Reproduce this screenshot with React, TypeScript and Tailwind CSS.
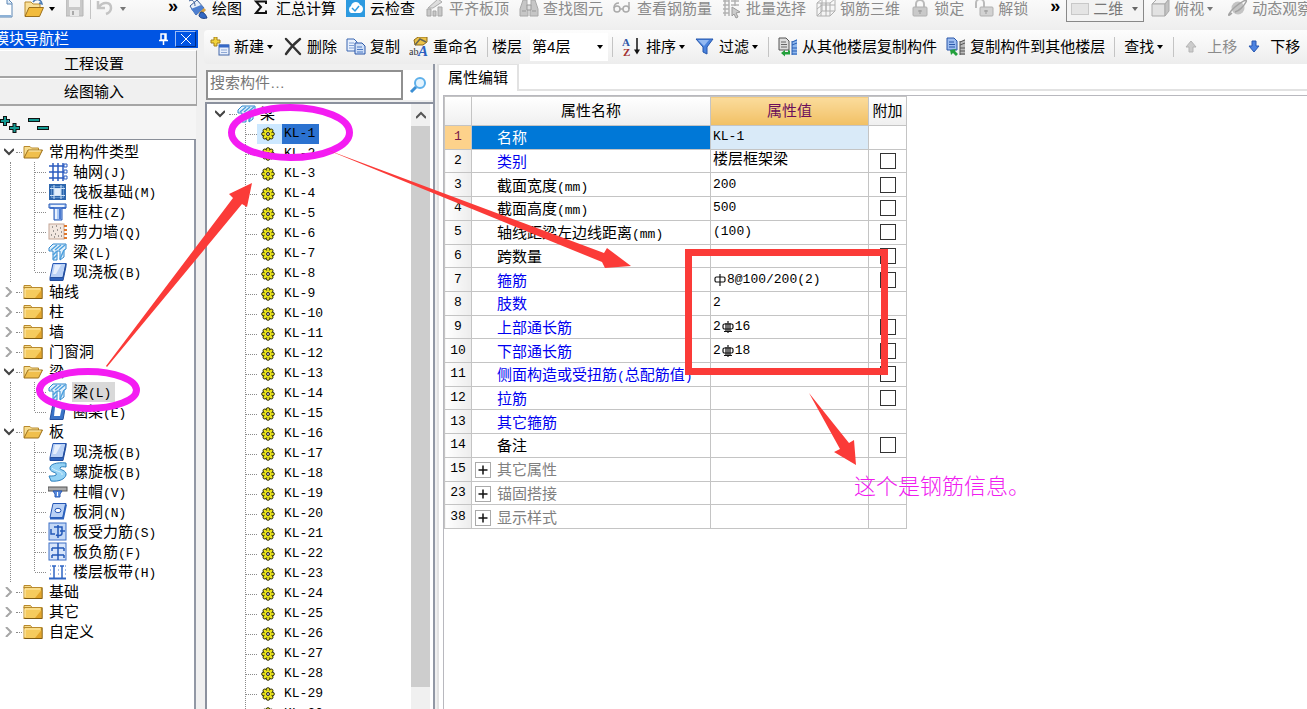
import React, { useState } from 'react';

type IconProps = { className?: string };

const Svg: React.FC<{ children: React.ReactNode; className?: string }> = ({ children, className = 'w-5 h-5' }) => (
  <svg viewBox="0 0 20 20" className={`${className} shrink-0`} fill="none" aria-hidden="true">
    {children}
  </svg>
);

const Caret: React.FC<IconProps> = ({ className = 'text-black' }) => (
  <svg viewBox="0 0 8 8" className={`w-2 h-2 shrink-0 ${className}`} aria-hidden="true">
    <path d="M1 2h6L4 6z" fill="currentColor" />
  </svg>
);

const FolderIcon: React.FC<{ open?: boolean }> = ({ open }) => (
  <Svg>
    {open ? (
      <>
        <path d="M1 15.500V4.500h6l1.500 1.500h7v3" fill="#f7dd8d" stroke="#b98a2d" />
        <path d="M1 16l4-8h14.500l-4 8z" fill="#f0bf4c" stroke="#9c701c" />
        <path d="M5.700 9h12" stroke="#fdf0bd" />
      </>
    ) : (
      <>
        <path d="M1 6V3.500h6.500L9 5.500h9.500" fill="#f7dd8d" stroke="#b98a2d" />
        <rect x="1" y="5.500" width="18" height="11" fill="#f6cb5e" stroke="#b98a2d" />
        <path d="M1.500 16.500h17.500V6" stroke="#7d5a14" />
        <path d="M2 7h15M2 7v8" stroke="#fdeeb5" />
        <path d="M12 16l6.500-8v8z" fill="#e3a52b" />
      </>
    )}
  </Svg>
);

const icons: Record<string, React.ReactNode> = {
  doc: (
    <Svg>
      <path d="M3 -1h10l5 5v14H3z" fill="#fff" stroke="#5c87b5" />
      <path d="M13 0v5h5" stroke="#5c87b5" fill="#dbe9f7" />
      <path d="M4 17h13" stroke="#8db1d6" strokeWidth="2" />
    </Svg>
  ),
  openFile: (
    <Svg>
      <path d="M1 17V3h6l2 2h7v4" fill="#f9e09a" stroke="#b98a2d" />
      <path d="M1 17.500l4-9h14.500l-4 9z" fill="#f2bb3c" stroke="#9c701c" />
      <path d="M9 3c3-4 8-3 9 2l-3-1" stroke="#4c7cb4" strokeWidth="1.500" />
    </Svg>
  ),
  save: (
    <Svg>
      <path d="M0 0h17v17H0z" fill="#c9c9c9" stroke="#b5b5b5" />
      <path d="M3 0h11v8H3z" fill="#f1f1f1" />
      <path d="M4 11h9v6H4z" fill="#e8e8e8" />
      <path d="M6 12h2v4H6z" fill="#aaa" />
    </Svg>
  ),
  undo: (
    <Svg>
      <path d="M3 2v7h7" stroke="#c4c4c4" strokeWidth="2.500" />
      <path d="M4 8c4-6 12-5 12 1 0 3-2 5-5 6" stroke="#c4c4c4" strokeWidth="2.500" />
    </Svg>
  ),
  paint: (
    <Svg>
      <path d="M2 7l7-6 7 8-8 7z" fill="#e8f0fa" stroke="#3c5f99" />
      <path d="M3 10l10-4 3 3-8 7z" fill="#4d7fd0" />
      <path d="M1 2c3-2 6 0 6 5" stroke="#3c5f99" />
      <path d="M17 10l-5 5" stroke="#d9a441" strokeWidth="3" />
      <path d="M13 13c3 0 5 3 6 6-4 1-8 0-8-3z" fill="#3268c4" stroke="#1d4184" />
    </Svg>
  ),
  sigma: (
    <Svg>
      <path d="M14 5V2.500H4l5 5.500-5 6h10v-2.500" stroke="#111" strokeWidth="2" />
    </Svg>
  ),
  cloud: (
    <Svg>
      <rect width="19" height="18" fill="#2d9ae0" />
      <path d="M5 14a4 4 0 0 1 0-7c1-5 8-5 9-1 4 1 4 7 0 8z" fill="#fff" />
      <path d="M6 9l3 3 4-5" stroke="#2d9ae0" strokeWidth="1.500" />
    </Svg>
  ),
  align: (
    <Svg>
      <path d="M3 9L13 0l4 3-9 6z" fill="#ddd" stroke="#aaa" />
      <path d="M2 10h4v7H2zM8 12h3v5H8zM13 8h4v9h-4z" fill="#c8c8c8" stroke="#a5a5a5" />
    </Svg>
  ),
  binoculars: (
    <Svg>
      <path d="M4 1h4v5l1 2v9H1V10zM12 1h4l3 9v7h-8V8l1-2z" fill="#c6c6c6" stroke="#a8a8a8" />
      <path d="M8 6h4v5H8zM3 12h4M13 12h4" fill="#ddd" stroke="#999" />
    </Svg>
  ),
  glasses: (
    <Svg>
      <circle cx="4" cy="10" r="3" stroke="#aaa" strokeWidth="1.500" />
      <circle cx="13" cy="10" r="3" stroke="#aaa" strokeWidth="1.500" />
      <path d="M7 10h3M1 9c0-4 3-5 5-5M16 10V3" stroke="#aaa" strokeWidth="1.500" />
    </Svg>
  ),
  batch: (
    <Svg>
      <path d="M1 2h6M9 2h8M1 6h6M9 6h8M1 10h6M1 14h6M3 1v16M7 1v16M13 1v6" stroke="#b2b2b2" strokeWidth="1.500" />
      <path d="M10 8l8 5-4 1 2 4-2 1-2-4-2 2z" fill="#ccc" stroke="#999" />
    </Svg>
  ),
  rebar3d: (
    <Svg>
      <path d="M1 4l5-4h13v12l-5 5H1zM6 0v12h13M1 4h13v13M14 4l5-4M6 12l-5 5M10 1v11M1 10l5-4h13M5 4v13M10 4v13" stroke="#b0b0b0" />
    </Svg>
  ),
  lock: (
    <Svg>
      <path d="M6 9V5a4 4 0 0 1 8 0v4" stroke="#bbb" strokeWidth="2" />
      <rect x="3" y="8" width="14" height="9" rx="1" fill="#c9c9c9" stroke="#b0b0b0" />
      <path d="M10 11v4M8 12h4" stroke="#999" />
    </Svg>
  ),
  unlock: (
    <Svg>
      <path d="M2 9V4a4 4 0 0 1 8 0v4" stroke="#bbb" strokeWidth="2" />
      <rect x="6" y="8" width="13" height="9" rx="1" fill="#d2d2d2" stroke="#b0b0b0" />
      <path d="M12 11v4M10 12h4" stroke="#999" />
    </Svg>
  ),
  cube: (
    <Svg>
      <path d="M2 5l5-5h12l-4 5z" fill="#eee" stroke="#aaa" />
      <path d="M2 5h13v12H2z" fill="#e2e2e2" stroke="#aaa" />
      <path d="M15 5l4-5v12l-4 5z" fill="#c2c2c2" stroke="#aaa" />
    </Svg>
  ),
  planet: (
    <Svg>
      <circle cx="10" cy="9" r="6.500" fill="#c4c4c4" />
      <path d="M4 14c-6 6-3-1 3-6s13-9 11-5-7 9-11 10" stroke="#a3a3a3" strokeWidth="1.500" />
    </Svg>
  ),
  create: (
    <Svg>
      <path d="M4 0h3v3h3v3H7v3H4V6H1V3h3z" fill="#f3d33c" stroke="#a5811a" />
      <rect x="9" y="8" width="10" height="10" fill="#e8effb" stroke="#4469a9" />
      <path d="M9 9h10" stroke="#3568c6" strokeWidth="3" />
      <path d="M11 13h6M11 15.500h6" stroke="#8fa9d6" />
    </Svg>
  ),
  remove: (
    <Svg>
      <path d="M3 2l14 15M17 2C12 6 7 11 3 17" stroke="#333" strokeWidth="2.400" strokeLinecap="round" />
    </Svg>
  ),
  copy: (
    <Svg>
      <path d="M1 2h7l3 3v9H1z" fill="#e9f1fd" stroke="#3a67b1" />
      <path d="M3 6h5M3 8.500h5M3 11h5" stroke="#7e9fd6" />
      <path d="M9 6h7l3 3v8H9z" fill="#cfdff7" stroke="#2a57a8" />
      <path d="M11 10h5M11 12.500h6M11 15h6" stroke="#4b79c5" />
    </Svg>
  ),
  rename: (
    <Svg>
      <path d="M5 3l4-3h9v5l-4 3H6z" fill="#ecc247" stroke="#8d6a1a" />
      <path d="M6 8l5-6 6 3" stroke="#665" strokeWidth="1.500" />
      <text x="0" y="18" fontSize="10" fill="#333" fontFamily="Liberation Serif, serif">ab</text>
      <text x="9" y="19" fontSize="15" fontWeight="bold" fontStyle="italic" fill="#2b5fc0" fontFamily="Liberation Serif, serif">A</text>
    </Svg>
  ),
  sort: (
    <Svg>
      <text x="0" y="9" fontSize="11" fontWeight="bold" fill="#2d57a8" fontFamily="Liberation Serif, serif">A</text>
      <text x="1" y="19" fontSize="11" fontWeight="bold" fill="#a33030" fontFamily="Liberation Serif, serif">Z</text>
      <path d="M15 1v15" stroke="#111" strokeWidth="1.500" />
      <path d="M12 12.500h6l-3 5z" fill="#111" />
    </Svg>
  ),
  filter: (
    <Svg>
      <path d="M1 2h17l-6 8v7l-4-2v-5z" fill="#4a83dd" stroke="#2557ad" />
      <path d="M3 3h11l-5 6z" fill="#94baf2" />
    </Svg>
  ),
  copyFrom: (
    <Svg>
      <path d="M1 1h7l3 3v9H1z" fill="#ddd" stroke="#555" />
      <path d="M3 5h5M3 7.500h6M3 10h6" stroke="#666" />
      <path d="M14 5l5-3v16h-5z" fill="#8db6ec" />
      <path d="M14 5l5-2M14 8l5-2M14 11h5M14 14h5M14 17h5M14 4v14" stroke="#285fb4" />
      <path d="M10 13v2h-3v-2l-4 3 4 3.500v-2h5v-4z" fill="#23a03c" />
    </Svg>
  ),
  copyTo: (
    <Svg>
      <path d="M1 1h7l3 3v9H1z" fill="#9dbdf0" stroke="#2a57a8" />
      <path d="M3 5h5M3 7.500h6M3 10h6" stroke="#2a57a8" />
      <path d="M14 5l5-3v16h-5z" fill="#bbb" />
      <path d="M14 5l5-2M14 8l5-2M14 11h5M14 14h5M14 17h5M14 4v14" stroke="#555" />
      <path d="M4 13l6-1-1 2 3 3-2 2-3-3-2 2z" fill="#23a03c" />
    </Svg>
  ),
  up: (
    <Svg>
      <path d="M8 4l5 6h-3v5H6v-5H3z" fill="#ccc" stroke="#b5b5b5" />
    </Svg>
  ),
  down: (
    <Svg>
      <path d="M8 15l5-6h-3V4H6v5H3z" fill="#4c82e0" stroke="#2857b0" />
    </Svg>
  ),
  grid: (
    <Svg>
      <path d="M5 1v18M10 1v18M15 1v18M1 4h17M1 10h17M1 16h17" stroke="#2c5cc0" strokeWidth="1.500" />
      <path d="M16 2h3v3h-3zM16 8h3v3h-3zM16 14h3v3h-3z" fill="#fff" stroke="#2c5cc0" />
    </Svg>
  ),
  raft: (
    <Svg>
      <rect x="1" y="2" width="17" height="16" fill="#2d66ad" />
      <path d="M3 4.500h13M3 15.500h13M3.500 4v12M15.500 4v12" stroke="#5f93cf" />
      <rect x="6.500" y="6.500" width="6" height="7" fill="#e3effc" stroke="#cfe3f8" />
      <path d="M6 3v14M13 3v14M2 6.500h15M2 13.500h15" stroke="#cfe3f8" />
    </Svg>
  ),
  column: (
    <Svg>
      <path d="M1 2h17v4h-4v12H6V6H1z" fill="#a9c8f5" stroke="#2758b5" />
      <path d="M3 4h13M8 7v10" stroke="#fff" strokeWidth="1.500" />
      <path d="M12 7v10M2 6h16" stroke="#2f62c4" strokeWidth="1.500" />
    </Svg>
  ),
  wall: (
    <Svg>
      <rect x="1" y="2" width="15" height="15" fill="#f2e7e0" stroke="#c3a595" />
      <path d="M4 5h1M8 4h1M12 6h1M5 9h1M9 8h1M13 10h1M3 13h1M7 12h1M10 14h1M6 15h1M13 14h1" stroke="#444" />
      <path d="M16 4h3M16 8h3M16 12h3M16 16h3" stroke="#e0762a" strokeWidth="2" />
    </Svg>
  ),
  beam: (
    <Svg>
      <path d="M1 6l4-4h13v5l-2 1v7l-4 3V9H9v9H5V9L1 9z" fill="#e2f1fc" stroke="#2f86cc" />
      <path d="M3 8l6-5M7 8l6-5M11 8l6-5M5 13l4-4M5 17l4-4M12 17l4-9" stroke="#4da0de" strokeWidth="1.500" />
    </Svg>
  ),
  slab: (
    <Svg>
      <path d="M5 1.500h13l-3 14H2z" fill="#b9d1f6" stroke="#2758b5" />
      <path d="M2 15.500h13l3-14v3l-3 14H2z" fill="#2c62bd" stroke="#244f9f" />
      <path d="M7 3h6l-5 9H5z" fill="#e6effc" />
    </Svg>
  ),
  ring: (
    <Svg>
      <path d="M5 1.500h13l-3 16H2z" fill="#3a73c8" stroke="#224f9f" />
      <path d="M7 5h7l-2 9H6z" fill="#fff" />
    </Svg>
  ),
  spiral: (
    <Svg>
      <path d="M18 1c-9-1-17 1-16 6 1 4 8 3 6 6-1 1-4 1-7 1l2 5c8 1 14-2 15-6 1-5-7-5-6-7 1-2 4-1 6-1z" fill="#94d2f5" stroke="#2c7fbd" />
      <path d="M4 6c4 4 11 3 10 7" stroke="#d9f1fd" />
    </Svg>
  ),
  cap: (
    <Svg>
      <rect x="0" y="5" width="19" height="4" fill="#aaa" stroke="#555" />
      <path d="M5 9h9l-2 3v3H7v-3z" fill="#5c8fe0" stroke="#2758b5" />
      <path d="M9.500 10v4" stroke="#fff" />
    </Svg>
  ),
  hole: (
    <Svg>
      <path d="M5 1.500h13l-3 14H2z" fill="#b9d1f6" stroke="#2758b5" />
      <path d="M2 16.500h13l3-14" stroke="#2c62bd" strokeWidth="2" />
      <ellipse cx="10" cy="8.500" rx="3" ry="2.200" fill="#fff" stroke="#2758b5" />
    </Svg>
  ),
  barS: (
    <Svg>
      <rect x="1" y="1" width="17" height="17" fill="#c3d8f6" stroke="#3c6fc6" />
      <path d="M3 7v5h4M10 3v13M6 5h8v6c0 3-4 3-6 2M12 9h5" stroke="#2358b8" strokeWidth="1.500" />
    </Svg>
  ),
  barF: (
    <Svg>
      <rect x="1" y="1" width="17" height="17" fill="#d7e5fa" stroke="#3c6fc6" />
      <path d="M10 1v17M4 6h12M4 13h12M4 6v3M16 6v3M4 13v3M16 13v3" stroke="#2358b8" strokeWidth="1.500" />
    </Svg>
  ),
  strip: (
    <Svg>
      <path d="M1 16.500h17" stroke="#2f65c4" strokeWidth="2" />
      <path d="M4 4h4M12 4h4M6 4v12M14 4v12" stroke="#2f65c4" strokeWidth="1.500" />
      <path d="M2 4h1M2 8h1M2 12h1M10 4h1M10 8h1M10 12h1M17 4h1M17 8h1M17 12h1" stroke="#4c7ace" />
    </Svg>
  ),
};

const GearIcon: React.FC = () => (
  <svg viewBox="0 0 14 14" className="w-3.5 h-3.5 shrink-0" fill="none" aria-hidden="true">
    <g fill="#ece51c" stroke="#2a2a08">
      <circle cx="7" cy="2.500" r="1.800" />
      <circle cx="7" cy="11.500" r="1.800" />
      <circle cx="2.500" cy="7" r="1.800" />
      <circle cx="11.500" cy="7" r="1.800" />
      <circle cx="3.800" cy="3.800" r="1.800" />
      <circle cx="10.200" cy="3.800" r="1.800" />
      <circle cx="3.800" cy="10.200" r="1.800" />
      <circle cx="10.200" cy="10.200" r="1.800" />
    </g>
    <circle cx="7" cy="7" r="3.800" fill="#ece51c" />
    <circle cx="7" cy="7" r="1.500" fill="#ddd" stroke="#222" />
  </svg>
);

// Chinese at 15px, half-width characters in the mono face
const Mixed: React.FC<{ text: string }> = ({ text }) => (
  <>
    {text.split(/([\x20-\x7e]+)/).map((part, i) =>
      i % 2 ? (
        <span key={i} className="font-['Liberation_Mono',monospace] text-[13px] leading-none">{part}</span>
      ) : (
        part
      )
    )}
  </>
);

const Chevron: React.FC<{ open?: boolean }> = ({ open }) => (
  <svg viewBox="0 0 10 10" className="w-2.5 h-2.5 shrink-0" fill="none" strokeWidth="2" aria-hidden="true">
    {open ? <path d="M0 2l5 5 5-5" stroke="#444" /> : <path d="M2 0l5 5-5 5" stroke="#a6a6a6" />}
  </svg>
);

const Branch: React.FC<{ last?: boolean; className?: string }> = ({ last, className = 'w-3.5' }) => (
  <svg viewBox="0 0 14 20" preserveAspectRatio="xMinYMid slice" className={`${className} h-5 shrink-0`} stroke="#8a8a8a" strokeDasharray="1 1" aria-hidden="true">
    <path d={last ? 'M.5 0v10' : 'M.5 0v20'} />
    <path d="M1 10.500h12" />
  </svg>
);

interface ToolProps {
  icon?: string;
  label?: string;
  caret?: boolean;
  disabled?: boolean;
}

const Tool: React.FC<ToolProps> = ({ icon, label, caret, disabled }) => (
  <button
    type="button"
    disabled={disabled}
    aria-label={label ?? icon}
    className="flex items-center shrink-0 gap-1 whitespace-nowrap text-black disabled:text-[#8a8a8a]"
  >
    {icon && icons[icon]}
    {(label || caret) && (
      <span className="flex items-center gap-0.5">
        {label}
        {caret && <Caret className={disabled ? 'text-[#777]' : 'text-black'} />}
      </span>
    )}
  </button>
);

const Separator: React.FC = () => <span className="w-px h-5 shrink-0 bg-[#c4c4c4]" />;

const drawTools: ToolProps[] = [
  { icon: 'paint', label: '绘图' },
  { icon: 'sigma', label: '汇总计算' },
  { icon: 'cloud', label: '云检查' },
  { icon: 'align', label: '平齐板顶', disabled: true },
  { icon: 'binoculars', label: '查找图元', disabled: true },
  { icon: 'glasses', label: '查看钢筋量', disabled: true },
  { icon: 'batch', label: '批量选择', disabled: true },
  { icon: 'rebar3d', label: '钢筋三维', disabled: true },
  { icon: 'lock', label: '锁定', disabled: true },
  { icon: 'unlock', label: '解锁', disabled: true },
];

interface TreeGroup {
  name: string;
  items?: { icon: string; name: string; selected?: boolean }[];
}

const navTree: TreeGroup[] = [
  {
    name: '常用构件类型',
    items: [
      { icon: 'grid', name: '轴网(J)' },
      { icon: 'raft', name: '筏板基础(M)' },
      { icon: 'column', name: '框柱(Z)' },
      { icon: 'wall', name: '剪力墙(Q)' },
      { icon: 'beam', name: '梁(L)' },
      { icon: 'slab', name: '现浇板(B)' },
    ],
  },
  { name: '轴线' },
  { name: '柱' },
  { name: '墙' },
  { name: '门窗洞' },
  {
    name: '梁',
    items: [
      { icon: 'beam', name: '梁(L)', selected: true },
      { icon: 'ring', name: '圈梁(E)' },
    ],
  },
  {
    name: '板',
    items: [
      { icon: 'slab', name: '现浇板(B)' },
      { icon: 'spiral', name: '螺旋板(B)' },
      { icon: 'cap', name: '柱帽(V)' },
      { icon: 'hole', name: '板洞(N)' },
      { icon: 'barS', name: '板受力筋(S)' },
      { icon: 'barF', name: '板负筋(F)' },
      { icon: 'strip', name: '楼层板带(H)' },
    ],
  },
  { name: '基础' },
  { name: '其它' },
  { name: '自定义' },
];

const beams = Array.from({ length: 30 }, (_, i) => `KL-${i + 1}`);

const RebarMark: React.FC<{ grade: 1 | 3 }> = ({ grade }) => (
  <svg viewBox="0 0 14 14" className="w-3.5 h-3.5 shrink-0" fill="none" stroke="#111" strokeWidth="1.200" aria-hidden="true">
    <rect x="2" y="4" width="10" height="5" rx="1.500" />
    {grade === 1 ? <path d="M7 1v12" /> : <path d="M7 1v12M5 3v8M9 3v8M3 11.500h8" />}
  </svg>
);

interface Property {
  no: number;
  name: string;
  value?: React.ReactNode;
  check?: boolean;
  tone?: 'blue' | 'gray';
}

const properties: Property[] = [
  { no: 1, name: '名称', value: 'KL-1' },
  { no: 2, name: '类别', value: <span className="text-[15px]">楼层框架梁</span>, check: true, tone: 'blue' },
  { no: 3, name: '截面宽度(mm)', value: '200', check: true },
  { no: 4, name: '截面高度(mm)', value: '500', check: true },
  { no: 5, name: '轴线距梁左边线距离(mm)', value: '(100)', check: true },
  { no: 6, name: '跨数量', check: true },
  { no: 7, name: '箍筋', value: <><RebarMark grade={1} />8@100/200(2)</>, check: true, tone: 'blue' },
  { no: 8, name: '肢数', value: '2', tone: 'blue' },
  { no: 9, name: '上部通长筋', value: <>2<RebarMark grade={3} />16</>, check: true, tone: 'blue' },
  { no: 10, name: '下部通长筋', value: <>2<RebarMark grade={3} />18</>, check: true, tone: 'blue' },
  { no: 11, name: '侧面构造或受扭筋(总配筋值)', check: true, tone: 'blue' },
  { no: 12, name: '拉筋', check: true, tone: 'blue' },
  { no: 13, name: '其它箍筋', tone: 'blue' },
  { no: 14, name: '备注', check: true },
  { no: 15, name: '其它属性', tone: 'gray' },
  { no: 23, name: '锚固搭接', tone: 'gray' },
  { no: 38, name: '显示样式', tone: 'gray' },
];

const nameColor = (p: Property) => {
  if (p.no === 1) return 'bg-[#0078d7] text-white';
  if (p.tone === 'blue') return 'text-[#0000f0]';
  if (p.tone === 'gray') return 'text-[#808080]';
  return 'text-black';
};

const TopBar: React.FC = () => (
  <header className="h-[30px] shrink-0 overflow-hidden bg-linear-to-b from-[#fafafa] to-[#eeeeee]">
    <div className="flex items-center h-[18px] gap-[10px]">
      <div className="flex items-center w-[184px] shrink-0 gap-2.5 -ml-1.5">
        <Tool icon="doc" />
        <Tool icon="openFile" caret />
        <div className="flex items-center gap-1">
          <Tool icon="save" disabled />
          <Separator />
          <Tool icon="undo" disabled caret />
        </div>
        <span className="ml-auto pb-1.5 text-[18px] leading-none font-bold">»</span>
      </div>
      {drawTools.map((t) => (
        <Tool key={t.label} {...t} />
      ))}
      <span className="ml-3 -mr-1 pb-1.5 text-[18px] leading-none font-bold">»</span>
      <div className="relative flex items-center shrink-0 w-[78px] h-[26px] border border-[#888] bg-[#f3f3f3]">
        <span className="w-[18px] h-3 ml-1 shrink-0 border border-[#c8c8c8] bg-[#e4e4e4]" />
        <select aria-label="视图" className="appearance-none w-full pl-1 text-[#777] outline-none">
          <option>二维</option>
        </select>
        <span className="absolute right-1 pointer-events-none"><Caret className="text-[#666]" /></span>
      </div>
      <div className="flex items-center gap-3.5 -ml-1">
        <Tool icon="cube" label="俯视" caret disabled />
        <Tool icon="planet" label="动态观察" disabled />
      </div>
    </div>
  </header>
);

const ModuleNav: React.FC = () => (
  <aside className="flex flex-col w-[198px] shrink-0 overflow-hidden">
    <div className="flex items-center h-[18px] shrink-0 bg-[#0054e3] text-white">
      <h2 className="-ml-1.5 whitespace-nowrap">模块导航栏</h2>
      <button type="button" aria-label="固定" className="ml-auto mr-1.5">
        <svg viewBox="0 0 12 12" className="w-3 h-3" stroke="#fff" fill="none" strokeWidth="1.500">
          <path d="M4 1h5v6H4zM8 1v6M2 7.500h9M6.500 8v4" />
        </svg>
      </button>
      <button type="button" aria-label="关闭" className="flex items-center justify-center w-[21px] h-4 mr-0.5 border border-[#9dbcf5] border-r-[#002d86] border-b-[#002d86]">
        <svg viewBox="0 0 12 12" className="w-3 h-3" stroke="#fff">
          <path d="M1 1l10 10M11 1L1 11" />
        </svg>
      </button>
    </div>
    <div className="flex flex-col shrink-0 mr-px pt-0.5">
      {['工程设置', '绘图输入'].map((t) => (
        <button key={t} type="button" className="h-7 pr-2 border-r border-b-2 border-[#a5a5a5] border-t border-t-white bg-[#f0f0f0]">
          {t}
        </button>
      ))}
    </div>
    <div className="h-[34px] shrink-0 mr-0.5 border-b border-[#8a8f99] bg-[#f5f5f5]">
      <svg viewBox="0 0 52 33" className="w-[52px] h-[33px]" strokeWidth="4" stroke="#111" aria-hidden="true">
        <path d="M0 15h10M5 10v10M9 22h11M14.500 17v10M28 14h12M37 22h12" />
        <path d="M1 15h8M5 11v8M10 22h9M14.500 18v8M29 14h10M38 22h10" stroke="#149a92" strokeWidth="2" />
      </svg>
    </div>
    <ul className="flex-1 min-h-0 pt-0.5 mr-0.5 bg-white border-r-2 border-[#9298a5] overflow-hidden">
      {navTree.map((group) => (
        <li key={group.name}>
          <div className="flex items-center h-5 pl-1">
            <Chevron open={!!group.items} />
            <span className="w-1.5 ml-0.5 mr-px shrink-0 border-t border-dotted border-[#8a8a8a]" />
            <FolderIcon open={!!group.items} />
            <span className="ml-1.5 whitespace-nowrap">{group.name}</span>
          </div>
          {group.items && (
            <ul className="ml-2.5 pl-[23px] border-l border-dotted border-[#8a8a8a]">
              {group.items.map((item, i) => (
                <li key={item.name} className="flex items-center h-5">
                  <Branch last={i === group.items!.length - 1} />
                  {icons[item.icon]}
                  <span className={`ml-1 px-px pr-1 leading-5 whitespace-nowrap ${item.selected ? 'bg-[#d9d9d9]' : ''}`}>
                    <Mixed text={item.name} />
                  </span>
                </li>
              ))}
            </ul>
          )}
        </li>
      ))}
    </ul>
  </aside>
);

const ActionBar: React.FC = () => (
  <div className="flex items-center shrink-0 h-[34px] gap-[9px] pl-1.5 ml-1.5 rounded-l bg-linear-to-b from-[#fdfdfd] to-[#ededed] overflow-hidden">
    <Tool icon="create" label="新建" caret />
    <Tool icon="remove" label="删除" />
    <Tool icon="copy" label="复制" />
    <Tool icon="rename" label="重命名" />
    <div className="flex items-center gap-1 shrink-0">
      <Separator />
      <label htmlFor="floor">楼层</label>
      <div className="relative flex items-center w-[78px] h-7 ml-1 bg-white">
        <select id="floor" className="appearance-none w-full pl-0.5 outline-none">
          <option>第4层</option>
        </select>
        <span className="absolute right-1 pointer-events-none"><Caret /></span>
      </div>
      <Separator />
    </div>
    <Tool icon="sort" label="排序" caret />
    <Tool icon="filter" label="过滤" caret />
    <Separator />
    <Tool icon="copyFrom" label="从其他楼层复制构件" />
    <Tool icon="copyTo" label="复制构件到其他楼层" />
    <Separator />
    <Tool label="查找" caret />
    <Separator />
    <Tool icon="up" label="上移" disabled />
    <Tool icon="down" label="下移" />
  </div>
);

const ComponentList: React.FC = () => {
  const [query, setQuery] = useState('');

  return (
    <section className="flex flex-col w-[230px] shrink-0 ml-[7px] pt-1.5 border-r-2 border-[#9298a5]">
      <div className="flex shrink-0 h-[30px] ml-px">
        <input
          aria-label="搜索构件"
          value={query}
          onChange={(e) => setQuery(e.target.value)}
          placeholder="搜索构件…"
          className="w-[197px] pl-0.5 pb-1 border-2 border-[#909090] bg-white outline-none placeholder:text-[#777]"
        />
        <button type="button" aria-label="搜索" className="flex items-center justify-center flex-1 bg-white">
          <svg viewBox="0 0 20 20" className="w-5 h-5" fill="none">
            <circle cx="12" cy="8" r="5" stroke="#5eb0ea" strokeWidth="2" fill="#e4f4fe" />
            <path d="M8 12l-5 5" stroke="#3b8fd4" strokeWidth="3" />
          </svg>
        </button>
      </div>
      <div className="flex flex-1 min-h-0 mt-0.5 border-l-2 border-t-2 border-[#8b919e] bg-white overflow-hidden">
        <ul className="flex-1">
          <li className="flex items-center h-5 pl-2">
            <Chevron open />
            <span className="w-2 ml-1 shrink-0 border-t border-dotted border-[#8a8a8a]" />
            {icons.beam}
            <span className="ml-[3px]">梁</span>
          </li>
          {beams.map((name, i) => (
            <li key={name} className="flex items-center h-5 pl-[38px]">
              <Branch className="w-3" />
              <span className={`flex items-center h-5 w-[25px] pl-1 ${i === 0 ? 'bg-[#cce8ff]' : ''}`}>
                <GearIcon />
              </span>
              <span className={`pl-0.5 pr-1 leading-5 font-['Liberation_Mono',monospace] text-[13px] ${i === 0 ? 'bg-[#2b72d0]' : ''}`}>
                {name}
              </span>
            </li>
          ))}
        </ul>
        <div className="flex flex-col w-[19px] mr-[3px] shrink-0 bg-[#f0f0f0]">
          <button type="button" aria-label="向上滚动" className="flex items-center justify-center h-[22px] shrink-0">
            <svg viewBox="0 0 10 10" className="w-2.5 h-2.5" fill="none" stroke="#555" strokeWidth="2">
              <path d="M0 8l5-5 5 5" />
            </svg>
          </button>
          <span className="flex-1 mb-[22px] bg-[#cdcdcd]" />
        </div>
      </div>
    </section>
  );
};

const PropertyEditor: React.FC = () => (
  <section className="flex flex-col flex-1 min-w-0 ml-0.5 bg-white border-l-2 border-[#e2e2e2]">
    <div className="flex shrink-0">
      <button type="button" className="w-[80px] h-[27px] border-t border-r-2 border-[#e2e2e2] text-center">属性编辑</button>
      <span className="flex-1 border-b-2 border-[#e2e2e2]" />
    </div>
    <div className="flex-1 mt-1 ml-1 border-l border-t border-[#b8b8be]">
      <table className="w-[462px] h-[433px] table-fixed border-collapse text-left [&_td]:border [&_td]:border-[#c4c4c4] [&_th]:border [&_th]:border-[#c4c4c4]">
        <colgroup>
          <col className="w-[27px]" />
          <col className="w-[239px]" />
          <col className="w-[158px]" />
          <col className="w-[38px]" />
        </colgroup>
        <thead>
          <tr className="h-[29px] bg-linear-to-b from-white to-[#efefef] [&>th]:font-normal [&>th]:text-center">
            <th aria-label="序号" />
            <th>属性名称</th>
            <th className="bg-linear-to-b from-[#fbdc9c] to-[#f1c063] text-[#6b0f5b]">属性值</th>
            <th className="whitespace-nowrap">附加</th>
          </tr>
        </thead>
        <tbody>
          {properties.map((p) => (
            <tr key={p.no} className="leading-5">
              <th
                scope="row"
                className={`text-center font-normal font-['Liberation_Mono',monospace] text-[13px] ${
                  p.no === 1 ? 'bg-[#fdd28b] text-[#7a1a4a]' : 'bg-linear-to-r from-white to-[#ececec]'
                }`}
              >
                {p.no}
              </th>
              <td className={nameColor(p)}>
                <div className="flex items-center h-5 pt-0.5 whitespace-nowrap">
                  <span className="flex w-[25px] pl-[3px] shrink-0">
                    {p.tone === 'gray' && (
                      <button type="button" aria-label={`展开${p.name}`} className="w-4 h-4 border border-[#aaa]">
                        <svg viewBox="0 0 14 14" className="w-3.5 h-3.5" stroke="#111" strokeWidth="1.500">
                          <path d="M2.500 7h9M7 2.500v9" />
                        </svg>
                      </button>
                    )}
                  </span>
                  <span><Mixed text={p.name} /></span>
                </div>
              </td>
              <td className={p.no === 1 ? 'bg-[#d9eaf8]' : ''}>
                <div className="flex items-center h-5 pl-0.5 font-['Liberation_Mono','Noto_Sans_CJK_SC',monospace] text-[13px] whitespace-nowrap">
                  {p.value}
                </div>
              </td>
              <td>
                {p.check && (
                  <input
                    type="checkbox"
                    aria-label={`${p.name} 附加`}
                    className="block mx-auto w-4 h-4 appearance-none border border-[#333] bg-white checked:bg-[#333]"
                  />
                )}
              </td>
            </tr>
          ))}
        </tbody>
      </table>
    </div>
  </section>
);

// Callouts drawn over the whole window
const Annotations: React.FC = () => (
  <div className="absolute inset-0 pointer-events-none">
    <svg width="1307" height="709" viewBox="0 0 1307 709" fill="none" aria-hidden="true">
      <ellipse cx="290.500" cy="132.500" rx="59" ry="25" stroke="#f41cf2" strokeWidth="7" />
      <ellipse cx="88" cy="390" rx="48.500" ry="18.500" stroke="#f41cf2" strokeWidth="7" />
      <g fill="#fb3b38">
        <path d="M106 366L233 198l-4-4 23-11-5 24-5-3L107 367z" />
        <path d="M325 149L604 253l3-5 24 18-26 2-3-6z" />
        <path d="M809 393l40 50 5-3 2 25-22-13 6-3z" />
      </g>
      <rect x="688.500" y="252.500" width="196" height="119" stroke="#fb3b38" strokeWidth="7" />
    </svg>
    <p className="absolute left-[854px] top-[471px] text-[22px] leading-8 font-light text-[#f01cf0] whitespace-nowrap">
      这个是钢筋信息。
    </p>
  </div>
);

const App: React.FC = () => {
  return (
    <div className="relative flex flex-col h-screen overflow-hidden bg-[#f0f0f0] text-black text-[15px] leading-[18px] font-['Liberation_Sans','Noto_Sans_CJK_SC',sans-serif]">
      <TopBar />
      <div className="flex flex-1 min-h-0">
        <ModuleNav />
        <main className="flex flex-col flex-1 min-w-0">
          <ActionBar />
          <div className="flex flex-1 min-h-0">
            <ComponentList />
            <PropertyEditor />
          </div>
        </main>
      </div>
      <Annotations />
    </div>
  );
};

export default App;
